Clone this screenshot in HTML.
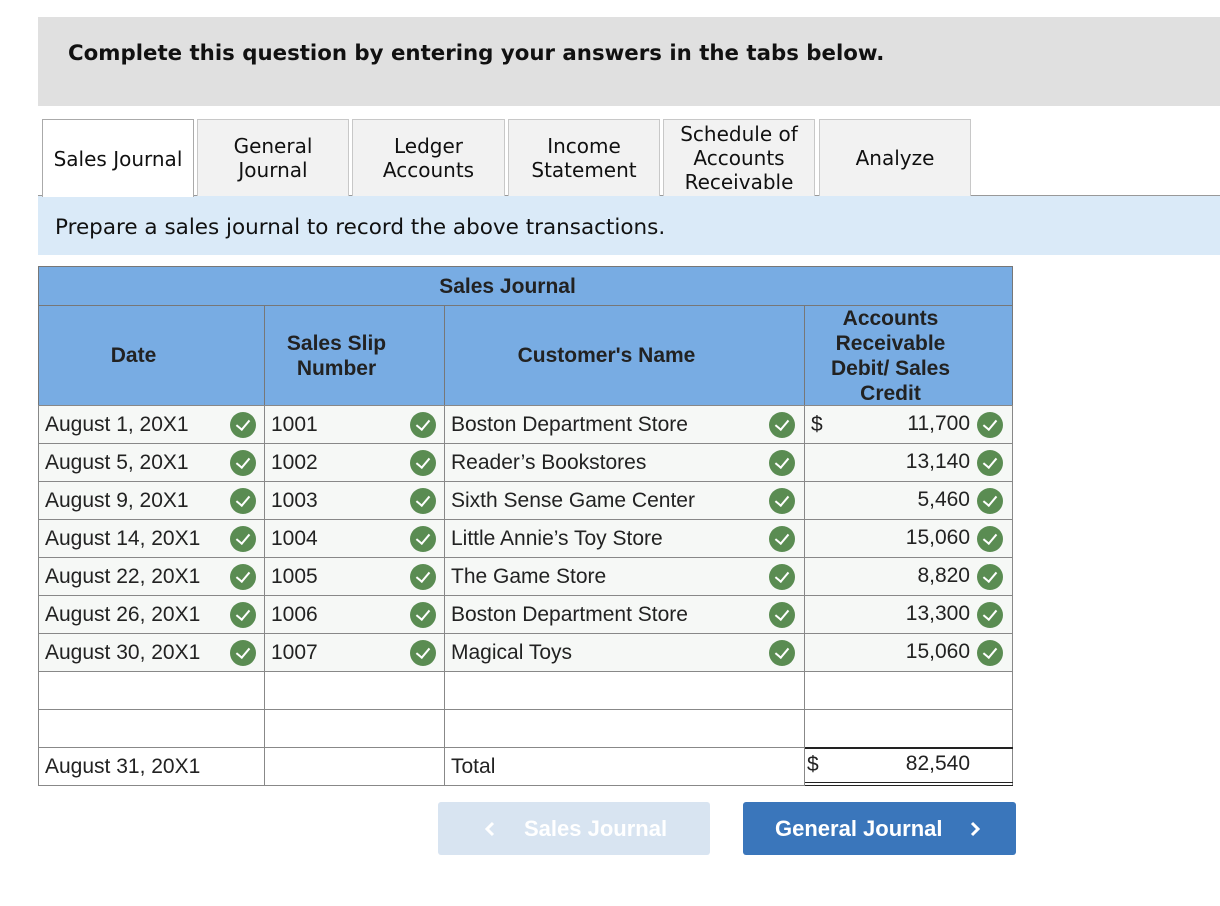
<!DOCTYPE html>
<html><head><meta charset="utf-8"><style>
*{margin:0;padding:0;box-sizing:border-box}
body{width:1220px;height:906px;background:#fff;position:relative;font-family:"Liberation Sans",Arial,sans-serif;color:#222;overflow:hidden}
.a{position:absolute}
.hdr{left:38px;top:17px;width:1182px;height:89px;background:#e0e0e0}
.hdr span{position:absolute;left:30px;top:24px;font:bold 21.3px "DejaVu Sans",Verdana,sans-serif;color:#111;white-space:nowrap}
.tab{position:absolute;top:119px;height:77px;border:1px solid #c8c8c8;border-bottom:none;background:#f2f2f2;font:20px "DejaVu Sans",Verdana,sans-serif;color:#111;display:flex;align-items:center;justify-content:center;text-align:center;line-height:24px;padding-top:0px;white-space:nowrap}
.tab.on{background:#fff;border-color:#aaa;height:78px;z-index:2}
.tline{left:38px;top:195px;width:1182px;height:1px;background:#999}
.inst{left:38px;top:196px;width:1182px;height:59px;background:#daeaf8}
.inst span{position:absolute;left:17px;top:19px;font:21.5px "DejaVu Sans",Verdana,sans-serif;color:#111;white-space:nowrap}
.hcell{position:absolute;background:#78ace3;border:1px solid #777;font-weight:bold;font-size:21px;color:#222;display:flex;align-items:center;justify-content:center;text-align:center;line-height:25px;padding-right:36px}
.cell{position:absolute;background:#f6f8f6;border:1px solid #888;font-size:21px;color:#222;line-height:38px;padding-left:6px;white-space:nowrap}
.ck{position:absolute;width:26px;height:26px;border-radius:50%;background:#5a8c52}
.ck:after{content:"";position:absolute;left:9px;top:5px;width:6px;height:11px;border:solid #fff;border-width:0 2.5px 2.5px 0;transform:rotate(40deg)}
.amt{position:absolute;font-size:21px;color:#222;text-align:right;width:120px}
.btn{position:absolute;top:802px;height:53px;border-radius:3px;font-weight:bold;font-size:22px;color:#fff;line-height:53px;white-space:nowrap}
</style></head><body>
<div class="a hdr"><span>Complete this question by entering your answers in the tabs below.</span></div>
<div class="a tline"></div>
<div class="tab on" style="left:42px;width:152px">Sales Journal</div>
<div class="tab" style="left:197px;width:152px">General<br>Journal</div>
<div class="tab" style="left:352px;width:153px">Ledger<br>Accounts</div>
<div class="tab" style="left:508px;width:152px">Income<br>Statement</div>
<div class="tab" style="left:663px;width:152px">Schedule of<br>Accounts<br>Receivable</div>
<div class="tab" style="left:819px;width:152px">Analyze</div>
<div class="a inst"><span>Prepare a sales journal to record the above transactions.</span></div>

<div class="hcell" style="left:38px;top:266px;width:975px;height:40px">Sales Journal</div>
<div class="hcell" style="left:38px;top:305px;width:227px;height:101px">Date</div>
<div class="hcell" style="left:264px;top:305px;width:181px;height:101px">Sales Slip<br>Number</div>
<div class="hcell" style="left:444px;top:305px;width:361px;height:101px">Customer's Name</div>
<div class="hcell" style="left:804px;top:305px;width:209px;height:101px">Accounts<br>Receivable<br>Debit/ Sales<br>Credit</div>

<div class="cell" style="left:38px;top:405px;width:227px;height:39px">August 1, 20X1</div><div class="cell" style="left:264px;top:405px;width:181px;height:39px">1001</div><div class="cell" style="left:444px;top:405px;width:361px;height:39px">Boston Department Store</div><div class="cell" style="left:804px;top:405px;width:209px;height:39px">$</div>
<div class="cell" style="left:38px;top:443px;width:227px;height:39px">August 5, 20X1</div><div class="cell" style="left:264px;top:443px;width:181px;height:39px">1002</div><div class="cell" style="left:444px;top:443px;width:361px;height:39px">Reader’s Bookstores</div><div class="cell" style="left:804px;top:443px;width:209px;height:39px"></div>
<div class="cell" style="left:38px;top:481px;width:227px;height:39px">August 9, 20X1</div><div class="cell" style="left:264px;top:481px;width:181px;height:39px">1003</div><div class="cell" style="left:444px;top:481px;width:361px;height:39px">Sixth Sense Game Center</div><div class="cell" style="left:804px;top:481px;width:209px;height:39px"></div>
<div class="cell" style="left:38px;top:519px;width:227px;height:39px">August 14, 20X1</div><div class="cell" style="left:264px;top:519px;width:181px;height:39px">1004</div><div class="cell" style="left:444px;top:519px;width:361px;height:39px">Little Annie’s Toy Store</div><div class="cell" style="left:804px;top:519px;width:209px;height:39px"></div>
<div class="cell" style="left:38px;top:557px;width:227px;height:39px">August 22, 20X1</div><div class="cell" style="left:264px;top:557px;width:181px;height:39px">1005</div><div class="cell" style="left:444px;top:557px;width:361px;height:39px">The Game Store</div><div class="cell" style="left:804px;top:557px;width:209px;height:39px"></div>
<div class="cell" style="left:38px;top:595px;width:227px;height:39px">August 26, 20X1</div><div class="cell" style="left:264px;top:595px;width:181px;height:39px">1006</div><div class="cell" style="left:444px;top:595px;width:361px;height:39px">Boston Department Store</div><div class="cell" style="left:804px;top:595px;width:209px;height:39px"></div>
<div class="cell" style="left:38px;top:633px;width:227px;height:39px">August 30, 20X1</div><div class="cell" style="left:264px;top:633px;width:181px;height:39px">1007</div><div class="cell" style="left:444px;top:633px;width:361px;height:39px">Magical Toys</div><div class="cell" style="left:804px;top:633px;width:209px;height:39px"></div>
<div class="cell" style="left:38px;top:671px;width:227px;height:39px;background:#fff"></div><div class="cell" style="left:264px;top:671px;width:181px;height:39px;background:#fff"></div><div class="cell" style="left:444px;top:671px;width:361px;height:39px;background:#fff"></div><div class="cell" style="left:804px;top:671px;width:209px;height:39px;background:#fff"></div>
<div class="cell" style="left:38px;top:709px;width:227px;height:39px;background:#fff"></div><div class="cell" style="left:264px;top:709px;width:181px;height:39px;background:#fff"></div><div class="cell" style="left:444px;top:709px;width:361px;height:39px;background:#fff"></div><div class="cell" style="left:804px;top:709px;width:209px;height:39px;background:#fff"></div>
<div class="cell" style="left:38px;top:747px;width:227px;height:39px;background:#fff">August 31, 20X1</div><div class="cell" style="left:264px;top:747px;width:181px;height:39px;background:#fff"></div><div class="cell" style="left:444px;top:747px;width:361px;height:39px;background:#fff">Total</div><div class="cell" style="left:804px;top:747px;width:209px;height:39px;background:#fff;padding-left:2px;line-height:34px">$</div>
<div class="a" style="left:805px;top:747px;width:208px;height:2px;background:#222"></div>
<div class="a" style="left:805px;top:782px;width:208px;height:1px;background:#222"></div>
<div class="a" style="left:805px;top:785px;width:208px;height:1px;background:#222"></div>
<div class="amt" style="left:850px;top:752px">82,540</div>

<div class="amt" style="left:850px;top:412px">11,700</div>
<div class="amt" style="left:850px;top:450px">13,140</div>
<div class="amt" style="left:850px;top:488px">5,460</div>
<div class="amt" style="left:850px;top:526px">15,060</div>
<div class="amt" style="left:850px;top:564px">8,820</div>
<div class="amt" style="left:850px;top:602px">13,300</div>
<div class="amt" style="left:850px;top:640px">15,060</div>

<div class="ck" style="left:230px;top:412px"></div><div class="ck" style="left:410px;top:412px"></div><div class="ck" style="left:769px;top:412px"></div><div class="ck" style="left:977px;top:412px"></div>
<div class="ck" style="left:230px;top:450px"></div><div class="ck" style="left:410px;top:450px"></div><div class="ck" style="left:769px;top:450px"></div><div class="ck" style="left:977px;top:450px"></div>
<div class="ck" style="left:230px;top:488px"></div><div class="ck" style="left:410px;top:488px"></div><div class="ck" style="left:769px;top:488px"></div><div class="ck" style="left:977px;top:488px"></div>
<div class="ck" style="left:230px;top:526px"></div><div class="ck" style="left:410px;top:526px"></div><div class="ck" style="left:769px;top:526px"></div><div class="ck" style="left:977px;top:526px"></div>
<div class="ck" style="left:230px;top:564px"></div><div class="ck" style="left:410px;top:564px"></div><div class="ck" style="left:769px;top:564px"></div><div class="ck" style="left:977px;top:564px"></div>
<div class="ck" style="left:230px;top:602px"></div><div class="ck" style="left:410px;top:602px"></div><div class="ck" style="left:769px;top:602px"></div><div class="ck" style="left:977px;top:602px"></div>
<div class="ck" style="left:230px;top:640px"></div><div class="ck" style="left:410px;top:640px"></div><div class="ck" style="left:769px;top:640px"></div><div class="ck" style="left:977px;top:640px"></div>

<div class="btn" style="left:438px;width:272px;background:#d8e4f1"><svg class="a" style="left:46px;top:19px" width="12" height="16" viewBox="0 0 12 16"><path d="M9 2 L3 8 L9 14" fill="none" stroke="#fff" stroke-width="3"/></svg><span class="a" style="left:86px;top:0">Sales Journal</span></div>
<div class="btn" style="left:743px;width:273px;background:#3a76bb"><span class="a" style="left:32px;top:0">General Journal</span><svg class="a" style="left:226px;top:19px" width="12" height="16" viewBox="0 0 12 16"><path d="M3 2 L9 8 L3 14" fill="none" stroke="#fff" stroke-width="3"/></svg></div>
</body></html>
